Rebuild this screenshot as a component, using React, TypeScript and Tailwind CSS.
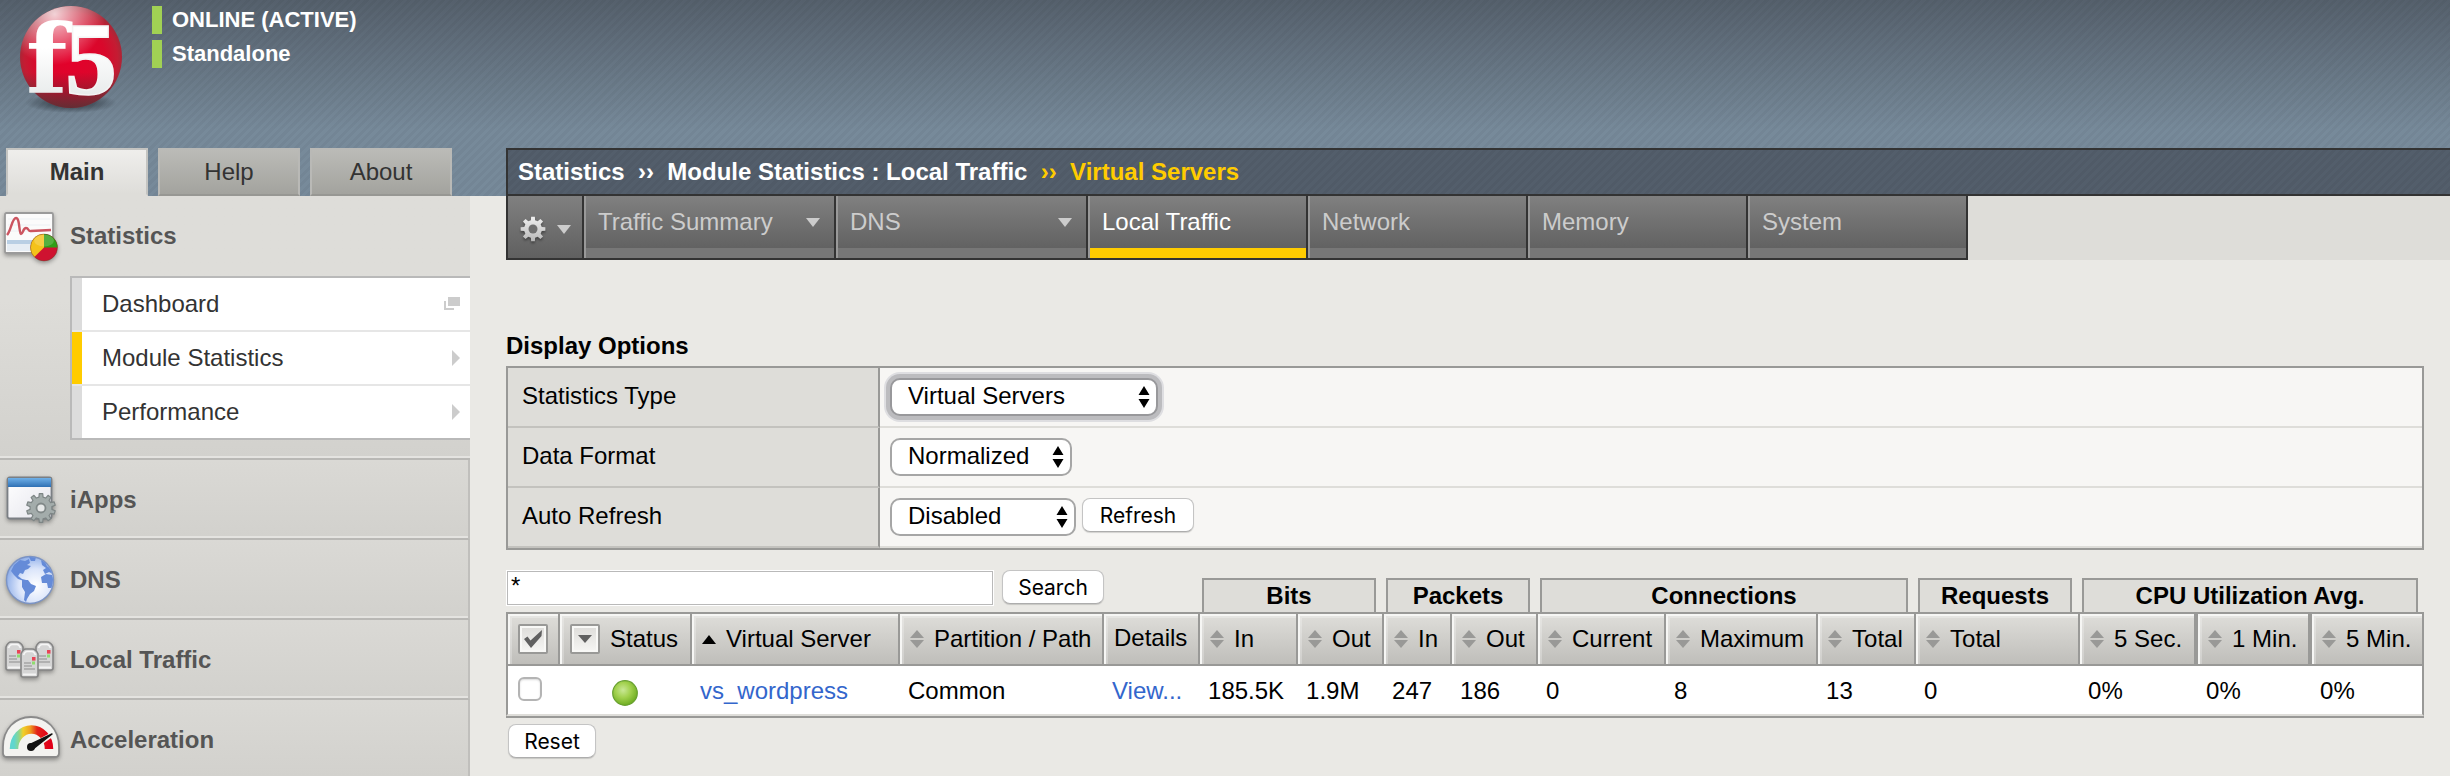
import React from "react";

const STRIPES =
  "bg-[repeating-linear-gradient(135deg,rgba(0,0,0,0.035)_0px,rgba(0,0,0,0.035)_3px,transparent_3px,transparent_6px),linear-gradient(to_bottom,#55606c_0px,#778a9a_130px)]";
const CRUMB_STRIPES =
  "bg-[repeating-linear-gradient(135deg,rgba(0,0,0,0.04)_0px,rgba(0,0,0,0.04)_3px,transparent_3px,transparent_6px)]";

function gearPath(cx: number, cy: number, teeth: number, outer: number, inner: number) {
  const pts: string[] = [];
  const step = (Math.PI * 2) / teeth;
  for (let i = 0; i < teeth; i++) {
    const a = i * step - Math.PI / 2;
    const corners: [number, number][] = [
      [a - step * 0.3, inner],
      [a - step * 0.19, outer],
      [a + step * 0.19, outer],
      [a + step * 0.3, inner],
    ];
    corners.forEach(([t, r]) =>
      pts.push(`${(cx + r * Math.cos(t)).toFixed(2)} ${(cy + r * Math.sin(t)).toFixed(2)}`)
    );
  }
  return `M${pts.join("L")}Z`;
}

function Logo() {
  return (
    <svg width="130" height="120" viewBox="0 0 130 120" role="img" aria-label="f5">
      <defs>
        <radialGradient id="ball" cx="0.5" cy="0.52" r="0.52">
          <stop offset="0" stopColor="#e4002b" />
          <stop offset="0.65" stopColor="#d9082b" />
          <stop offset="0.88" stopColor="#c41c33" />
          <stop offset="1" stopColor="#a02a38" />
        </radialGradient>
        <radialGradient id="gloss" cx="0.34" cy="0.08" r="0.5">
          <stop offset="0" stopColor="#fff" stopOpacity="0.8" />
          <stop offset="1" stopColor="#fff" stopOpacity="0" />
        </radialGradient>
        <linearGradient id="shade" x1="0" y1="0" x2="0" y2="1">
          <stop offset="0.65" stopColor="#333" stopOpacity="0" />
          <stop offset="1" stopColor="#333" stopOpacity="0.65" />
        </linearGradient>
        <linearGradient id="letter" x1="0" y1="0" x2="0" y2="1">
          <stop offset="0.4" stopColor="#ffffff" />
          <stop offset="1" stopColor="#dfe3e3" />
        </linearGradient>
        <radialGradient id="drop">
          <stop offset="0" stopColor="#1d242b" stopOpacity="0.9" />
          <stop offset="1" stopColor="#1d242b" stopOpacity="0" />
        </radialGradient>
      </defs>
      <ellipse cx="71" cy="103" rx="46" ry="10" fill="url(#drop)" />
      <circle cx="71" cy="57" r="51" fill="url(#ball)" />
      <circle cx="71" cy="57" r="51" fill="url(#gloss)" />
      <circle cx="71" cy="57" r="51" fill="url(#shade)" />
      <text x="26" y="93" fontSize="96" fontWeight="700" fontFamily="'DejaVu Serif', serif" fill="url(#letter)">f</text>
      <text x="65" y="94" fontSize="104" fontWeight="700" fontFamily="'Liberation Serif', serif" fill="url(#letter)" stroke="#f4f5f5" strokeWidth="1.5">5</text>
    </svg>
  );
}

function StatisticsIcon() {
  return (
    <svg width="62" height="56" viewBox="0 0 62 56" className="drop-shadow-[0_2px_2px_rgba(0,0,0,0.35)]" aria-hidden="true">
      <rect x="5" y="5" width="48" height="40" rx="1.5" fill="#fbfbfb" stroke="#9a9a9a" strokeWidth="1.8" />
      <path d="M8 11H50M8 17H50M8 23H50M8 39H50" stroke="#edf1f4" strokeWidth="1" />
      <rect x="7" y="32" width="44" height="4" fill="#b9cfe4" />
      <rect x="7" y="36" width="44" height="7" fill="#e6edf4" />
      <path d="M7 27C11 23 12 10 16 10S19 26 21 26S23 20 26 20S28 24 31 23L51 22" fill="none" stroke="#cc5560" strokeWidth="2.4" />
      <circle cx="44" cy="39.500" r="13.500" fill="#cf1230" />
      <path d="M44 39.500V26A13.500 13.500 0 0 0 34.400 49Z" fill="#f4c21b" />
      <path d="M44 39.500V26A13.500 13.500 0 0 1 57.500 39.500Z" fill="#2f9e16" />
      <ellipse cx="44" cy="32.500" rx="10" ry="6" fill="#fff" fillOpacity="0.18" />
      <circle cx="44" cy="39.500" r="13.500" fill="none" stroke="#55451f" strokeOpacity="0.35" strokeWidth="1" />
    </svg>
  );
}

function IAppsIcon() {
  return (
    <svg width="62" height="56" viewBox="0 0 62 56" className="drop-shadow-[0_2px_2px_rgba(0,0,0,0.35)]" aria-hidden="true">
      <defs>
        <linearGradient id="bar" x1="0" y1="0" x2="0" y2="1">
          <stop offset="0" stopColor="#6fb0e8" />
          <stop offset="1" stopColor="#2f70b4" />
        </linearGradient>
        <linearGradient id="win" x1="0" y1="0" x2="1" y2="1">
          <stop offset="0" stopColor="#ffffff" />
          <stop offset="1" stopColor="#e4e4ec" />
        </linearGradient>
      </defs>
      <rect x="7.500" y="5.500" width="44" height="41" rx="2" fill="url(#win)" stroke="#7b7f84" strokeWidth="1.8" />
      <rect x="8" y="6" width="43" height="9" fill="url(#bar)" />
      <path d={gearPath(41, 36, 10, 14.5, 11)} fill="#a3acab" stroke="#7d8585" strokeWidth="1.2" strokeLinejoin="round" />
      <circle cx="41" cy="36" r="4.500" fill="#e6e8e8" stroke="#808888" strokeWidth="1.8" />
    </svg>
  );
}

function GlobeIcon() {
  return (
    <svg width="62" height="56" viewBox="0 0 62 56" className="drop-shadow-[0_2px_2px_rgba(0,0,0,0.35)]" aria-hidden="true">
      <defs>
        <radialGradient id="sea" cx="0.62" cy="0.62" r="0.65">
          <stop offset="0" stopColor="#ffffff" />
          <stop offset="0.55" stopColor="#dbe5fa" />
          <stop offset="1" stopColor="#8eaee9" />
        </radialGradient>
        <clipPath id="disc"><circle cx="30" cy="28" r="23" /></clipPath>
      </defs>
      <circle cx="30" cy="28" r="23.500" fill="url(#sea)" stroke="#7b93c4" strokeWidth="1.4" />
      <g clipPath="url(#disc)" fill="#658bd8">
        <path d="M11 19L14 13L20 8L25 9L29 7L30 11L27 13L31 14L28 17L25 18L23 22L20 21L18 24L22 27L26 28L24 29L18 27L14 23Z" />
        <path d="M29 5L36 5L35 9L31 9Z" />
        <path d="M22 28L28 28L31 32L36 34L34 39L30 42L27 47L26 50L24 48L25 40L22 35Z" />
        <path d="M41 8L45 10L47 14L51 17L53 22L49 20L45 22L43 18L46 16L42 13Z" />
        <path d="M41 25L46 22L52 23L54 28L52 36L48 36L47 31L42 31Z" />
      </g>
    </svg>
  );
}

function Server({ x, y }: { x: number; y: number }) {
  return (
    <g transform={`translate(${x} ${y})`}>
      <path d="M1 6Q3 1 6 1H12Q16 1 18 6V27Q18 29 16 29H3Q1 29 1 27Z" fill="#d5d5d5" stroke="#858585" strokeWidth="1.6" />
      <path d="M3.500 7Q5 3.500 7 3.500H12Q14 3.500 15.500 7" fill="none" stroke="#f6f6f6" strokeWidth="1.6" />
      <path d="M4 15H11M4 18H12M4 21H15" stroke="#a5a5a5" strokeWidth="1.4" />
      <rect x="12" y="9" width="3.500" height="3.600" fill="#e84455" />
      <rect x="12" y="13.500" width="3" height="3" fill="#8fdc6f" />
      <path d="M3 26.500H16" stroke="#f3f3f3" strokeWidth="2" />
    </g>
  );
}

function ServersIcon() {
  return (
    <svg width="62" height="56" viewBox="0 0 62 56" className="drop-shadow-[0_2px_2px_rgba(0,0,0,0.35)]" aria-hidden="true">
      <Server x={5} y={9} />
      <Server x={35} y={9} />
      <Server x={20} y={16} />
    </svg>
  );
}

function GaugeIcon() {
  return (
    <svg width="62" height="56" viewBox="0 3 62 56" className="drop-shadow-[0_2px_2px_rgba(0,0,0,0.35)]" aria-hidden="true">
      <defs>
        <linearGradient id="dial" x1="0" y1="0" x2="1" y2="0">
          <stop offset="0" stopColor="#5fd6cf" />
          <stop offset="0.14" stopColor="#8fd58c" />
          <stop offset="0.26" stopColor="#f0d028" />
          <stop offset="0.46" stopColor="#f0a01e" />
          <stop offset="0.66" stopColor="#e2231a" />
          <stop offset="1" stopColor="#e1001a" />
        </linearGradient>
      </defs>
      <path d="M3 38C3 20 15 8 31 8S59 20 59 38V44Q59 48 55 48H7Q3 48 3 44Z" fill="#f3f3f0" stroke="#8a8a8a" strokeWidth="1.8" />
      <path d="M14 40A17.500 19.500 0 0 1 49 40" fill="none" stroke="url(#dial)" strokeWidth="8.500" />
      <path d="M28 36L52 23L54 27L34 41Z" fill="#f3f3f0" />
      <path d="M29 36L52 25L33 40Z" fill="#111" stroke="#111" strokeWidth="1.500" strokeLinejoin="round" />
      <circle cx="31" cy="38" r="4" fill="#111" />
    </svg>
  );
}

function ToolbarGear() {
  return (
    <svg width="28" height="28" viewBox="0 0 28 28" className="drop-shadow-[0_2px_1px_rgba(0,0,0,0.35)]" aria-hidden="true">
      <defs>
        <linearGradient id="cog" x1="0" y1="0" x2="0" y2="1">
          <stop offset="0" stopColor="#f0f0f0" />
          <stop offset="1" stopColor="#b8b8b8" />
        </linearGradient>
      </defs>
      <path d={gearPath(14, 14, 8, 12.5, 9)} fill="url(#cog)" />
      <circle cx="14" cy="14" r="4.500" fill="#6f6f6f" />
    </svg>
  );
}

function Caret() {
  return (
    <svg width="14" height="9" viewBox="0 0 14 9" aria-hidden="true">
      <path d="M0 0H14L7 9Z" fill="#cccccc" />
    </svg>
  );
}

function SortIcon() {
  return (
    <svg width="14" height="20" viewBox="0 0 14 20" className="shrink-0" aria-hidden="true">
      <path d="M7 1L14 9H0ZM0 11H14L7 19Z" fill="#999997" />
    </svg>
  );
}

function Select({ id, value, width, focused }: { id: string; value: string; width: string; focused?: boolean }) {
  return (
    <span className={`relative inline-flex ${width}`}>
      <select
        id={id}
        defaultValue={value}
        className={`h-[38px] w-full appearance-none rounded-[10px] border-2 bg-white pb-0.5 pl-4 pr-8 text-2xl leading-7 text-black outline-none ${
          focused ? "border-[#98989b] shadow-[0_0_0_4px_#bcbcbf,0_0_0_6px_#dedee1]" : "border-[#a6a6a6]"
        }`}
      >
        <option>{value}</option>
      </select>
      <svg width="12" height="22" viewBox="0 0 12 22" className="pointer-events-none absolute right-2 top-2" aria-hidden="true">
        <path d="M6 0L11.500 9H0.500ZM0.500 13H11.500L6 22Z" fill="#000" />
      </svg>
    </span>
  );
}

function PushButton({ children, className = "" }: { children: React.ReactNode; className?: string }) {
  return (
    <button
      type="button"
      className={`h-[34px] rounded-lg border border-[#c4c4c4] border-b-[#adadad] bg-white pt-0.5 font-['Inter',sans-serif] text-[21px] leading-7 text-black shadow-[0_1px_1px_rgba(0,0,0,0.15)] ${className}`}
    >
      {children}
    </button>
  );
}

function SectionLink({ icon, label, last }: { icon: React.ReactNode; label: string; last?: boolean }) {
  return (
    <li
      className={`border-r-2 border-r-[#c0bfbc] bg-linear-to-b from-[#dad9d5] to-[#d2d1cd] ${
        last ? "" : "border-b-2 border-b-[#b9b8b5]"
      }`}
    >
      <a
        href="#"
        className={`flex items-center gap-2 pt-1 text-2xl font-bold text-[#555] ${
          last ? "h-[76px]" : "h-[78px] border-b-2 border-b-[#e4e3e0]"
        }`}
      >
        {icon}
        {label}
      </a>
    </li>
  );
}

const tabs = ["Main", "Help", "About"];

const subMenu = [
  { label: "Dashboard", popup: true },
  { label: "Module Statistics", active: true },
  { label: "Performance" },
];

const navTabs = [
  { label: "Traffic Summary", menu: true },
  { label: "DNS", menu: true },
  { label: "Local Traffic", active: true },
  { label: "Network" },
  { label: "Memory" },
  { label: "System" },
];

const groups = [
  { label: "Bits", span: 2 },
  { label: "Packets", span: 2 },
  { label: "Connections", span: 3 },
  { label: "Requests", span: 1 },
  { label: "CPU Utilization Avg.", span: 3 },
];

const counters = [
  { label: "In", value: "185.5K" },
  { label: "Out", value: "1.9M" },
  { label: "In", value: "247" },
  { label: "Out", value: "186" },
  { label: "Current", value: "0" },
  { label: "Maximum", value: "8" },
  { label: "Total", value: "13" },
  { label: "Total", value: "0" },
  { label: "5 Sec.", value: "0%", wide: true },
  { label: "1 Min.", value: "0%", wide: true },
  { label: "5 Min.", value: "0%" },
];

const TH =
  "h-[54px] border-y-2 border-r-2 border-[#999997] bg-linear-to-b from-[#dfdeda] to-[#bfbeba] p-0 text-left font-normal whitespace-nowrap shadow-[inset_2px_2px_0_#f6f6f4,inset_4px_4px_0_rgba(255,255,255,0.25)]";
const TD = "h-[50px] border-b-2 border-[#deddd9] p-0 pl-2 pt-0.5 text-left whitespace-nowrap";

function Header() {
  return (
    <header className={`flex h-[196px] items-stretch ${STRIPES}`}>
      <div className="flex w-[470px] shrink-0 flex-col justify-between">
        <div className="flex">
          <Logo />
          <div className="ml-[22px] flex flex-col gap-1.5 pt-1.5 text-[22px] font-bold leading-7 text-white">
            <p className="border-l-[10px] border-[#a1d154] pl-2.5">ONLINE (ACTIVE)</p>
            <p className="border-l-[10px] border-[#a1d154] pl-2.5">Standalone</p>
          </div>
        </div>
        <nav className="flex gap-2.5 pl-1.5 text-2xl text-[#333]">
          {tabs.map((tab, i) => (
            <a
              key={tab}
              href="#"
              className={`flex h-12 w-[142px] items-center justify-center border-2 ${
                i === 0
                  ? "border-[#c4c4c1] border-b-[#deddd9] bg-linear-to-b from-[#efeeec] to-[#deddd9] font-bold"
                  : "border-[#b9b9b6] border-b-[#979793] bg-linear-to-b from-[#bbbbb7] to-[#a3a39e]"
              }`}
            >
              {tab}
            </a>
          ))}
        </nav>
      </div>
      <div className="flex min-w-0 flex-1 items-end pl-9">
        <div
          className={`flex h-12 flex-1 items-center border-y-2 border-l-2 border-[#333] bg-[#535e6b] pl-2.5 text-2xl font-bold whitespace-pre text-white ${CRUMB_STRIPES}`}
        >
          <p>
            {"Statistics\u00a0 ››\u00a0 Module Statistics : Local Traffic\u00a0 "}
            <span className="text-[#ffcc00]">{"››\u00a0 Virtual Servers"}</span>
          </p>
        </div>
      </div>
    </header>
  );
}

function Sidebar() {
  return (
    <aside className="w-[470px] shrink-0 bg-[#d5d4d0]">
      <ul>
        <li className="border-b-2 border-b-[#b9b8b5] bg-linear-to-b from-[#deddd9] from-40% to-[#d2d1cd]">
          <div className="border-b-2 border-b-[#e4e3e0] pb-4">
            <a href="#" className="flex h-20 items-center gap-2 text-2xl font-bold text-[#555]">
              <StatisticsIcon />
              Statistics
            </a>
            <ul className="ml-[70px] border-y-2 border-l-2 border-[#b9b9b9] bg-white">
              {subMenu.map((item, i) => (
                <li key={item.label} className={i < 2 ? "border-b-2 border-[#e6e6e6]" : ""}>
                  <a
                    href="#"
                    className={`flex h-[52px] items-center justify-between border-l-[10px] pl-5 pr-2.5 text-2xl text-[#333] ${
                      item.active ? "border-[#ffcc00]" : "border-[#dcdcdc]"
                    }`}
                  >
                    {item.label}
                    {item.popup ? (
                      <svg width="16" height="14" viewBox="0 0 16 14" aria-hidden="true">
                        <path d="M4 0H16V9H4ZM0 4H2V11H10V13H0Z" fill="#cccccc" />
                      </svg>
                    ) : (
                      <svg width="8" height="16" viewBox="0 0 8 16" aria-hidden="true">
                        <path d="M0 0L8 8L0 16Z" fill="#cccccc" />
                      </svg>
                    )}
                  </a>
                </li>
              ))}
            </ul>
          </div>
        </li>
        <SectionLink icon={<IAppsIcon />} label="iApps" />
        <SectionLink icon={<GlobeIcon />} label="DNS" />
        <SectionLink icon={<ServersIcon />} label="Local Traffic" />
        <SectionLink icon={<GaugeIcon />} label="Acceleration" last />
      </ul>
    </aside>
  );
}

function NavBar() {
  return (
    <nav className="flex bg-[#deddd9] text-2xl">
      <button
        type="button"
        aria-label="Settings"
        className="flex h-16 w-[78px] items-center justify-center gap-2.5 border-x-2 border-b-2 border-[#333] bg-linear-to-b from-[#808080] to-[#606060] pt-1"
      >
        <ToolbarGear />
        <Caret />
      </button>
      {navTabs.map((tab) => (
        <a
          key={tab.label}
          href="#"
          className={`flex h-16 flex-col border-b-2 border-r-2 border-[#333] ${tab.menu ? "w-[252px]" : "w-[220px]"}`}
        >
          <span
            className={`flex flex-1 items-center justify-between border-l-2 border-[#999] bg-linear-to-b from-[#808080] to-[#626262] pl-3 pr-3.5 ${
              tab.active ? "text-white" : "text-[#cccccc]"
            }`}
          >
            {tab.label}
            {tab.menu && <Caret />}
          </span>
          <span className={`h-2.5 border-l-2 border-[#999] ${tab.active ? "bg-[#ffcc00]" : "bg-[#777]"}`} />
        </a>
      ))}
    </nav>
  );
}

function OptionRow({ id, label, children }: { id: string; label: string; children: React.ReactNode }) {
  return (
    <tr>
      <th scope="row" className="h-[60px] border-b-2 border-r-2 border-b-[#c3c2be] border-r-[#999997] bg-[#deddd9] p-0 pb-0.5 pl-3.5 text-left font-normal">
        <label htmlFor={id}>{label}</label>
      </th>
      <td className="border-b-2 border-[#deddd9] p-0 pl-2.5">
        <div className="flex items-start gap-1.5">{children}</div>
      </td>
    </tr>
  );
}

function DisplayOptions() {
  return (
    <section>
      <h2 className="mb-1.5 text-2xl font-bold leading-7">Display Options</h2>
      <table className="w-full table-fixed border-separate border-spacing-0 border-2 border-[#999997] bg-[#f7f6f4] text-2xl">
        <colgroup>
          <col className="w-[372px]" />
          <col />
        </colgroup>
        <tbody>
          <OptionRow id="stat-type" label="Statistics Type">
            <Select id="stat-type" value="Virtual Servers" width="w-[268px]" focused />
          </OptionRow>
          <OptionRow id="data-format" label="Data Format">
            <Select id="data-format" value="Normalized" width="w-[182px]" />
          </OptionRow>
          <OptionRow id="auto-refresh" label="Auto Refresh">
            <Select id="auto-refresh" value="Disabled" width="w-[186px]" />
            <PushButton className="w-28">Refresh</PushButton>
          </OptionRow>
        </tbody>
      </table>
    </section>
  );
}

function StatsTable() {
  return (
    <section className="mt-5">
      <table className="w-full table-fixed border-separate border-spacing-0 text-2xl">
        <colgroup>
          <col className="w-[54px]" />
          <col className="w-[132px]" />
          <col className="w-[208px]" />
          <col className="w-[204px]" />
          <col className="w-[96px]" />
          <col className="w-[98px]" />
          <col className="w-[86px]" />
          <col className="w-[68px]" />
          <col className="w-[86px]" />
          <col className="w-[128px]" />
          <col className="w-[152px]" />
          <col className="w-[98px]" />
          <col className="w-[164px]" />
          <col className="w-[118px]" />
          <col className="w-[114px]" />
          <col className="w-[112px]" />
        </colgroup>
        <thead>
          <tr>
            <td colSpan={5} className="h-[42px] p-0 align-top">
              <form className="flex gap-2" onSubmit={(e) => e.preventDefault()}>
                <input
                  type="text"
                  aria-label="Search"
                  defaultValue="*"
                  className="h-9 w-[488px] border border-white bg-white px-1 pb-1 text-2xl leading-7 text-black shadow-[inset_0_0_0_1px_#b9b9b9] outline-none"
                />
                <PushButton className="w-[102px]">Search</PushButton>
              </form>
            </td>
            {groups.map((g, i) => (
              <th key={g.label} scope="colgroup" colSpan={g.span} className="p-0 align-bottom">
                <div
                  className={`ml-0.5 h-[34px] border-x-2 border-t-2 border-[#999997] bg-[#deddd9] leading-8 whitespace-nowrap ${
                    i === groups.length - 1 ? "mr-1.5" : "mr-2"
                  }`}
                >
                  {g.label}
                </div>
              </th>
            ))}
          </tr>
          <tr>
            <th scope="col" className={`${TH} border-l-2`}>
              <button type="button" aria-label="Select all" className="ml-2.5 flex size-[30px] items-center justify-center rounded-xs border-2 border-[#999997] bg-linear-to-b from-[#dddcd9] to-[#f6f6f4] shadow-[inset_0_0_0_2px_#f8f8f6]">
                <svg width="20" height="20" viewBox="0 0 20 20" aria-hidden="true">
                  <path d="M1 10L4.500 7.500L7.500 11.500L19 1L18.500 7L8 19Z" fill="#606060" />
                </svg>
              </button>
            </th>
            <th scope="col" className={TH}>
              <div className="flex items-center gap-2.5 pl-2.5">
                <button type="button" aria-label="Filter by status" className="flex size-[30px] items-center justify-center rounded-xs border-2 border-[#999997] bg-linear-to-b from-[#dddcd9] to-[#f6f6f4] shadow-[inset_0_0_0_2px_#f8f8f6]">
                  <svg width="14" height="8" viewBox="0 0 14 8" aria-hidden="true">
                    <path d="M0 0H14L7 8Z" fill="#606060" />
                  </svg>
                </button>
                Status
              </div>
            </th>
            <th scope="col" className={TH}>
              <div className="flex items-center gap-2.5 pl-2.5">
                <svg width="14" height="9" viewBox="0 0 14 9" className="shrink-0" aria-hidden="true">
                  <path d="M7 0L14 9H0Z" fill="#000" />
                </svg>
                Virtual Server
              </div>
            </th>
            <th scope="col" className={TH}>
              <div className="flex items-center gap-2.5 pl-2.5">
                <SortIcon />
                Partition / Path
              </div>
            </th>
            <th scope="col" className={`${TH} pb-0.5 pl-2.5`}>Details</th>
            {counters.map((c, i) => (
              <th key={i} scope="col" className={`${TH} ${c.wide ? "border-r-4" : ""}`}>
                <div className="flex items-center gap-2.5 pl-2.5">
                  <SortIcon />
                  {c.label}
                </div>
              </th>
            ))}
          </tr>
        </thead>
        <tbody className="bg-white">
          <tr>
            <td className={`${TD} border-l-2 border-l-[#999997]`}>
              <input
                type="checkbox"
                aria-label="Select vs_wordpress"
                className="mb-1 ml-0.5 block size-6 appearance-none rounded-md border-2 border-[#b4b4b4] bg-white shadow-[inset_0_1px_2px_rgba(0,0,0,0.15)]"
              />
            </td>
            <td className={TD}>
              <svg width="26" height="26" viewBox="0 0 26 26" className="ml-11 mt-1" role="img" aria-label="Available">
                <defs>
                  <radialGradient id="led" cx="0.42" cy="0.38" r="0.62">
                    <stop offset="0" stopColor="#c9e896" />
                    <stop offset="0.5" stopColor="#a2d14e" />
                    <stop offset="1" stopColor="#6fae22" />
                  </radialGradient>
                </defs>
                <circle cx="13" cy="13" r="12.300" fill="url(#led)" stroke="#68a030" strokeWidth="1.200" />
              </svg>
            </td>
            <td className={TD}><a href="#" className="text-[#3366cc]">vs_wordpress</a></td>
            <td className={TD}>Common</td>
            <td className={TD}><a href="#" className="text-[#3366cc]">View...</a></td>
            {counters.map((c, i) => (
              <td key={i} className={`${TD} ${i === counters.length - 1 ? "border-r-2 border-r-[#999997]" : ""}`}>{c.value}</td>
            ))}
          </tr>
        </tbody>
      </table>
      <div className="border-t-2 border-[#999997] pl-0.5 pt-1.5">
        <PushButton className="w-[88px]">Reset</PushButton>
      </div>
    </section>
  );
}

export default function App() {
  return (
    <div className="flex min-h-screen flex-col bg-[#eae9e5] font-['Liberation_Sans',Arial,sans-serif] text-black">
      <Header />
      <div className="flex flex-1 items-stretch">
        <Sidebar />
        <main className="min-w-0 flex-1 pl-9">
          <NavBar />
          <div className="pr-[26px] pt-[72px]">
            <DisplayOptions />
            <StatsTable />
          </div>
        </main>
      </div>
    </div>
  );
}
